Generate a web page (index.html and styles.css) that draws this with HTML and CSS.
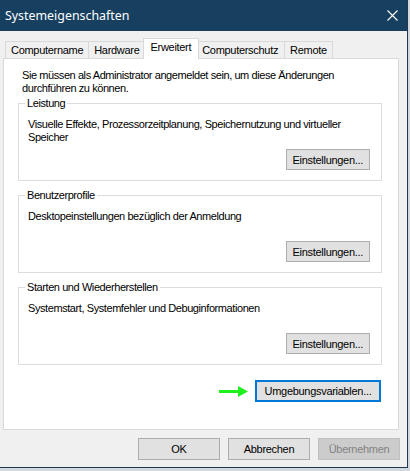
FILE: index.html
```html
<!DOCTYPE html>
<html lang="de">
<head>
    <meta charset="UTF-8">
    <title>Systemeigenschaften</title>
    <link rel="stylesheet" href="styles.css">
</head>
<body>
    <div class="desktop">
        <div class="dialog">
            <div class="titlebar">
                <span class="title">Systemeigenschaften</span>
                <button class="close" aria-label="Schließen">
                    <svg width="11" height="11" viewBox="0 0 11 11">
                        <path d="M0.5 0.5 L10.5 10.5 M10.5 0.5 L0.5 10.5" stroke="#fff" stroke-width="1.1" fill="none"/>
                    </svg>
                </button>
            </div>

            <div class="tabs">
                <div class="tab">Computername</div>
                <div class="tab">Hardware</div>
                <div class="tab active">Erweitert</div>
                <div class="tab">Computerschutz</div>
                <div class="tab">Remote</div>
            </div>

            <div class="panel">
                <p class="intro">Sie müssen als Administrator angemeldet sein, um diese Änderungen<br>durchführen zu können.</p>

                <fieldset class="group">
                    <legend>Leistung</legend>
                    <div class="group-body">
                        <p>Visuelle Effekte, Prozessorzeitplanung, Speichernutzung und virtueller<br>Speicher</p>
                        <button class="btn">Einstellungen...</button>
                    </div>
                </fieldset>

                <fieldset class="group">
                    <legend>Benutzerprofile</legend>
                    <div class="group-body">
                        <p>Desktopeinstellungen bezüglich der Anmeldung</p>
                        <button class="btn">Einstellungen...</button>
                    </div>
                </fieldset>

                <fieldset class="group">
                    <legend>Starten und Wiederherstellen</legend>
                    <div class="group-body">
                        <p>Systemstart, Systemfehler und Debuginformationen</p>
                        <button class="btn">Einstellungen...</button>
                    </div>
                </fieldset>

                <div class="env-row">
                    <!-- green pointer arrow -->
                    <svg class="arrow" width="30" height="13" viewBox="0 0 30 13">
                        <path d="M0 6.5 H25" stroke="#1ef01e" stroke-width="3" fill="none"/>
                        <path d="M19 1 L29 6.5 L19 12 Z" fill="#1ef01e"/>
                    </svg>
                    <button class="btn focused">Umgebungsvariablen...</button>
                </div>
            </div>

            <div class="actions">
                <button class="btn wide">OK</button>
                <button class="btn wide">Abbrechen</button>
                <button class="btn wide" disabled>Übernehmen</button>
            </div>
        </div>
    </div>
</body>
</html>
```

FILE: styles.css
```css
body {
    margin: 0;
    font-family: "Liberation Sans", Arial, sans-serif;
    font-size: 11px;
    color: #000;
}
.desktop {
    width: 410px;
    height: 471px;
    overflow: hidden;
    background: #d4d8dc;
}
.dialog {
    width: 407px;
    height: 467px;
    background: #f0f0f0;
    border-right: 1px solid #1d3954;
    border-bottom: 1px solid #1d3954;
    display: flex;
    flex-direction: column;
}

/* title bar */
.titlebar {
    height: 31px;
    flex: none;
    background: #173f60;
    color: #fff;
    display: flex;
    align-items: center;
    justify-content: space-between;
    padding-left: 5px;
}
.title {
    font-family: "Noto Sans", sans-serif;
    font-size: 12.4px;
}
.close {
    width: 30px;
    height: 31px;
    padding: 0;
    background: none;
    border: none;
    display: flex;
    align-items: center;
    justify-content: center;
}

/* tab strip */
.tabs {
    display: flex;
    align-items: flex-end;
    height: 20px;
    margin: 7px 0 0 5px;
    position: relative;
    z-index: 1;
    letter-spacing: -0.3px;
}
.tab {
    box-sizing: border-box;
    height: 17px;
    line-height: 16px;
    padding: 0 5px;
    border: 1px solid #d9d9d9;
    border-bottom: none;
    margin-left: -1px;
    background: #f0f0f0;
}
.tab:first-child {
    margin-left: 0;
}
.tab.active {
    height: 21px;
    margin: 0 -2px -1px -3px;
    padding: 0 7px;
    background: #fff;
    position: relative;
}
.tab.active + .tab {
    padding-right: 6px;
}

/* page of the selected tab */
.panel {
    box-sizing: border-box;
    height: 372px;
    margin: 0 8px 0 3px;
    padding: 10px 16px 0 14px;
    background: #fff;
    border: 1px solid #d9d9d9;
    letter-spacing: -0.42px;
}
p {
    margin: 0;
    line-height: 13px;
}
.intro {
    margin: 0 0 2px 4px;
}
.group {
    margin: 0;
    padding: 8px 11px 10px 9px;
    border: 1px solid #dcdcdc;
    min-width: 0;
}
.group + .group {
    margin-top: 8px;
}
.group legend {
    padding: 0 2px;
    margin-left: -3px;
    line-height: 13px;
}
.group-body {
    height: 52px;
    display: flex;
    flex-direction: column;
    justify-content: space-between;
    align-items: flex-start;
}
.group-body .btn {
    align-self: flex-end;
}

.btn {
    box-sizing: border-box;
    height: 21px;
    padding: 0 6px;
    min-width: 82px;
    font-family: inherit;
    font-size: 11px;
    letter-spacing: -0.3px;
    color: #000;
    background: #e1e1e1;
    border: 1px solid #adadad;
    border-radius: 0;
}
.btn.focused {
    height: 22px;
    width: 126px;
    border: 2px solid #0078d7;
}
.btn.wide {
    width: 73px;
    height: 22px;
}
.btn:disabled {
    background: #cccccc;
    border-color: #bfbfbf;
    color: #838383;
}

.env-row {
    display: flex;
    justify-content: flex-end;
    align-items: center;
    gap: 6px;
    margin: 15px 1px 0 0;
}

/* OK / Abbrechen / Übernehmen */
.actions {
    display: flex;
    justify-content: flex-end;
    gap: 8px;
    padding: 8px 7px 0 0;
}
```
